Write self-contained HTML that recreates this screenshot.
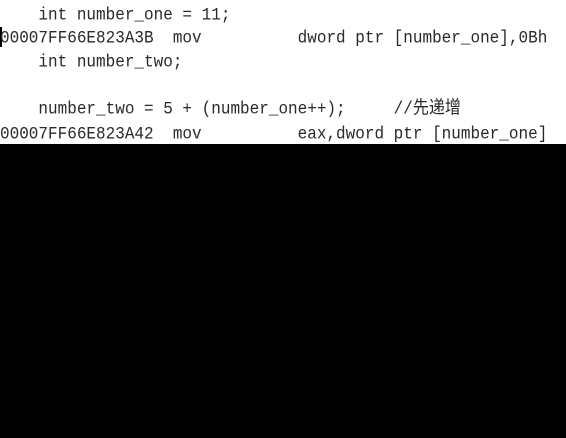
<html><head><style>
body{margin:0;width:566px;height:438px;background:#000;overflow:hidden}
.top{position:absolute;left:0;top:0;width:566px;height:144px;background:#fff;overflow:hidden}
.l{position:absolute;left:0;white-space:pre;font-family:"Liberation Mono","Noto Sans CJK SC",monospace;font-size:16px;letter-spacing:0px;color:#2a2a2a;line-height:20px;transform:scaleY(1.12);transform-origin:0 50%}
.cur{position:absolute;left:0;top:27px;width:2px;height:20px;background:#000}
</style></head><body><div class="top">
<div class="l" style="top:5px">    int number_one = 11;</div>
<div class="cur"></div>
<div class="l" style="top:28px">00007FF66E823A3B  mov          dword ptr [number_one],0Bh</div>
<div class="l" style="top:52px">    int number_two;</div>
<div class="l" style="top:99px">    number_two = 5 + (number_one++);     //先递增</div>
<div class="l" style="top:124px">00007FF66E823A42  mov          eax,dword ptr [number_one]</div>
</div></body></html>
